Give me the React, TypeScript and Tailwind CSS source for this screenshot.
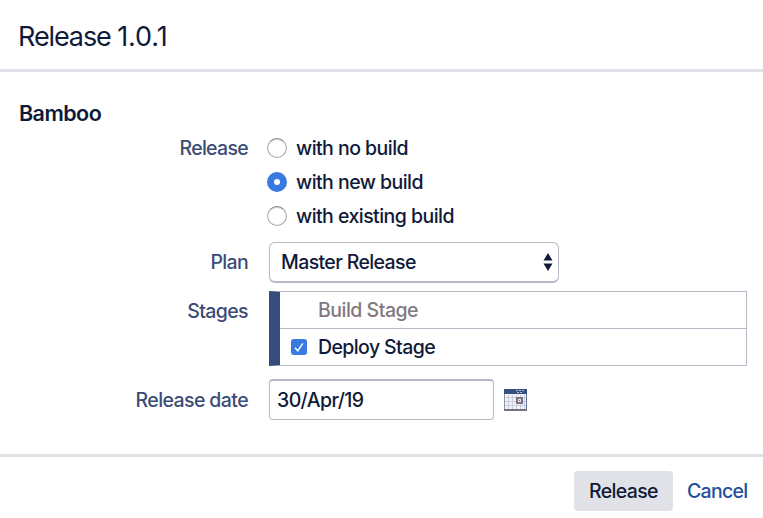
import type { ReactNode } from 'react';

const labelClass = 'w-[248px] shrink-0 text-right text-[#3b4c76]';

function Radio({ label, checked }: { label: string; checked?: boolean }) {
  return (
    <label className="flex h-[34px] items-center">
      {checked ? (
        <span className="flex size-5 items-center justify-center rounded-full bg-[#397ae0]">
          <span className="size-[6px] rounded-full bg-white" />
        </span>
      ) : (
        <span className="size-5 rounded-full border border-[#a6a7b0] border-t-[#85858b] bg-white shadow-[inset_0_1px_1px_#d9d9dd]" />
      )}
      <span className="ml-[9px] whitespace-nowrap tracking-[-0.54px]">{label}</span>
    </label>
  );
}

function Field({ label, className, children }: { label: string; className: string; children: ReactNode }) {
  return (
    <div className={`flex ${className}`}>
      <div className={labelClass}>{label}</div>
      {children}
    </div>
  );
}

function CalendarIcon() {
  return (
    <svg className="mt-px ml-[10px] h-[23px] w-[23px]" viewBox="0 0 23 23" shapeRendering="crispEdges">
      <rect x="1" y="1" width="21" height="21" fill="#f1f1f7" />
      <path d="M4.5 6V20M8.5 6V20M12.5 6V20M16.5 6V20M20.5 6V20M1 8.5H22M1 12.5H22M1 16.5H22" stroke="#c9ccda" fill="none" />
      <rect x="0" y="0" width="23" height="5" fill="#34507f" />
      <path d="M12 1.5H20M13 3.5H19" stroke="#b8bfd2" strokeDasharray="2 1" />
      <path d="M.5 5V22" stroke="#8f96ab" />
      <path d="M22.5 5V22" stroke="#60729b" />
      <path d="M0 21H23" stroke="#77717f" strokeWidth="2" />
      <rect x="13" y="9" width="5" height="5" fill="#e7e4ea" stroke="#7c7180" strokeWidth="2" />
      <rect x="15" y="11" width="1" height="1" fill="#7c7180" />
    </svg>
  );
}

export default function App() {
  return (
    <main className="flex h-[518px] w-[763px] flex-col overflow-hidden bg-white font-['Inter','Liberation_Sans',sans-serif] text-[19.5px] leading-6 font-[450] text-[#101a38]">
      <header className="h-[72px] border-b-[3px] border-[#e1e1e8] pl-[18px] pt-[21px]">
        <h1 className="text-[27px] leading-8 font-[430] tracking-[-1.1px]">
          Release <span className="tracking-[-0.1px]">1.0.1</span>
        </h1>
      </header>
      <section className="h-[382px] pt-[28px]">
        <h2 className="h-[31px] pl-[19px] text-[21.5px] leading-[26px] font-semibold tracking-[-0.55px]">Bamboo</h2>
        <Field label="Release" className="h-[102px] leading-[34px] tracking-[-0.7px]">
          <div className="ml-[19px] leading-6">
            <Radio label="with no build" />
            <Radio label="with new build" checked />
            <Radio label="with existing build" />
          </div>
        </Field>
        <Field label="Plan" className="mt-[9px] h-[41px] leading-10 tracking-[-0.7px]">
          <div className="ml-[21px] flex w-[290px] items-center justify-between rounded-[6px] border border-b-2 border-[#b5b9c5] pr-[5px] pl-[11px]">
            <span className="tracking-[-0.62px]">Master Release</span>
            <svg className="h-[18px] w-[10px]" viewBox="0 0 10 18">
              <path d="M5 0L9.5 7.5H.5ZM.5 10.5H9.5L5 18Z" fill="#101a38" />
            </svg>
          </div>
        </Field>
        <Field label="Stages" className="mt-2 h-[75px] leading-10 tracking-[-0.6px]">
          <div className="ml-[21px] flex h-[75px] w-[478px] flex-col border border-l-[11px] border-[#b5b9c5] border-l-[#344d7a]">
            <div className="h-[37px] border-b border-[#b5b9c5] pl-[38px] leading-9 tracking-[-0.5px] text-[#827980]">Build Stage</div>
            <div className="flex h-9 items-center pl-[11px]">
              <span className="flex size-4 items-center justify-center rounded-[3px] bg-[#397ae0]">
                <svg className="size-4" viewBox="0 0 16 16">
                  <path d="M4 8.7L6.8 11.8L11.8 4.3" fill="none" stroke="white" strokeWidth="1.4" />
                </svg>
              </span>
              <span className="ml-[11px]">Deploy Stage</span>
            </div>
          </div>
        </Field>
        <Field label="Release date" className="mt-[13px] h-[41px] items-center tracking-[-0.6px]">
          <div className="ml-[21px] flex h-[41px] w-[225px] items-center rounded-[4px] border border-t-2 border-[#b5b9c5] pl-[7px]">
            30/Apr/19
          </div>
          <CalendarIcon />
        </Field>
      </section>
      <footer className="flex h-[64px] border-t-[3px] border-[#e1e1e8] pt-[14px]">
        <button className="ml-[574px] h-10 w-[99px] rounded-[4px] bg-[#e1e2e7] tracking-[-0.65px]">Release</button>
        <a className="ml-[14px] leading-10 tracking-[-0.7px] text-[#214f9b]">Cancel</a>
      </footer>
    </main>
  );
}
